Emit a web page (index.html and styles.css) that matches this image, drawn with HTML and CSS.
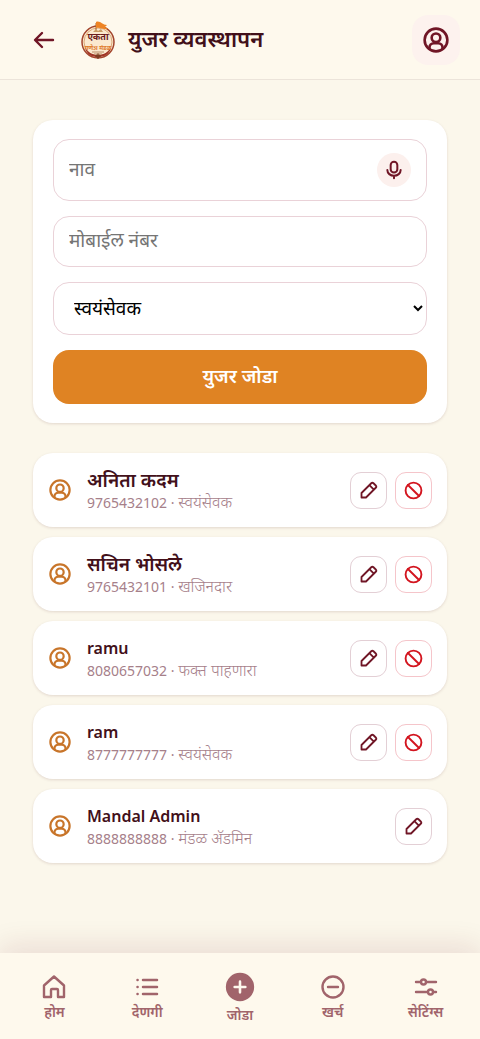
FILE: index.html
```html
<!DOCTYPE html>
<html lang="mr">
<head>
<meta charset="utf-8">
<meta name="viewport" content="width=device-width, initial-scale=1">
<title>युजर व्यवस्थापन</title>
<link rel="stylesheet" href="styles.css">
</head>
<body>
<svg class="sprite" aria-hidden="true">
  <symbol id="user" viewBox="0 0 24 24"><circle cx="12" cy="12" r="10.500"/><circle cx="12" cy="10" r="4"/><path d="M6 20v-1a4 4 0 0 1 4-4h4a4 4 0 0 1 4 4v1"/></symbol>
  <symbol id="pencil" viewBox="0 0 24 24"><path d="M2 22v-6L15 3Q16.500 1.500 18 3L21 6Q22.500 7.500 21 9L8 22ZM12.500 5.500l6 6"/></symbol>
  <symbol id="ban" viewBox="0 0 24 24"><circle cx="12" cy="12" r="10"/><path d="M5 5l14 14"/></symbol>
</svg>

<header class="topbar">
  <button class="back" type="button" aria-label="मागे">
    <svg class="icon icon-24" viewBox="0 0 24 24"><path d="M21 12H4M10 5l-7 7 7 7"/></svg>
  </button>
  <svg class="logo" viewBox="0 0 36 40" aria-hidden="true">
    <circle cx="18" cy="22" r="16" fill="#fbe9cf" stroke="#a3452c" stroke-width="1.500"/>
    <circle cx="18" cy="22" r="14" fill="none" stroke="#dba878" stroke-width="1"/>
    <path d="M5 28c2 7 7 9 13 9s11-2 13-9c-4 5-8 7-13 7s-9-2-13-7z" fill="#a03427"/>
    <path d="M16 3v8" stroke="#a8642e" stroke-width="1"/>
    <path d="M16 2c4-2 6 3 11 3l-2 2 3 2c-5 1-7-2-12-1z" fill="#ee8424"/>
    <path d="M15 36l3 3 3-3-3-3z" fill="#7d3c22"/>
    <path d="M13 12l3-3 2 2 3-2 2 3z" fill="#c99a63"/>
    <path d="M12 32h12M14 34h8" stroke="#b98a64" stroke-width="1"/>
    <text class="logo-name" x="18" y="20" text-anchor="middle">एकता</text>
    <text class="logo-sub" x="18" y="30" text-anchor="middle">गणेश मंडळ</text>
  </svg>
  <h1 class="title">युजर व्यवस्थापन</h1>
  <button class="profile" type="button" aria-label="प्रोफाइल"><svg class="icon icon-26"><use href="#user"/></svg></button>
</header>

<main class="content">
  <form class="card form">
    <div class="field field-voice">
      <input class="field-input" type="text" placeholder="नाव" aria-label="नाव">
      <button class="mic" type="button" aria-label="बोला">
        <svg class="icon icon-20" viewBox="0 0 24 24"><rect x="8" y="2" width="8" height="13" rx="4"/><path d="M4 12a8 7 0 0 0 16 0M12 19v3"/></svg>
      </button>
    </div>
    <input class="field field-phone" type="tel" placeholder="मोबाईल नंबर" aria-label="मोबाईल नंबर">
    <select class="field field-role" aria-label="भूमिका">
      <option>स्वयंसेवक</option>
      <option>खजिनदार</option>
      <option>फक्त पाहणारा</option>
    </select>
    <button class="submit" type="submit">युजर जोडा</button>
  </form>

  <ul class="users">
    <li class="card user">
      <svg class="icon icon-22 avatar"><use href="#user"/></svg>
      <div class="user-text"><div class="name">अनिता कदम</div><div class="meta">9765432102 · <span class="role">स्वयंसेवक</span></div></div>
      <div class="actions">
        <button class="action" type="button" aria-label="बदला"><svg class="icon icon-18"><use href="#pencil"/></svg></button>
        <button class="action danger" type="button" aria-label="बंद करा"><svg class="icon icon-19"><use href="#ban"/></svg></button>
      </div>
    </li>
    <li class="card user">
      <svg class="icon icon-22 avatar"><use href="#user"/></svg>
      <div class="user-text"><div class="name">सचिन भोसले</div><div class="meta">9765432101 · <span class="role">खजिनदार</span></div></div>
      <div class="actions">
        <button class="action" type="button" aria-label="बदला"><svg class="icon icon-18"><use href="#pencil"/></svg></button>
        <button class="action danger" type="button" aria-label="बंद करा"><svg class="icon icon-19"><use href="#ban"/></svg></button>
      </div>
    </li>
    <li class="card user">
      <svg class="icon icon-22 avatar"><use href="#user"/></svg>
      <div class="user-text"><div class="name name-latin">ramu</div><div class="meta">8080657032 · <span class="role">फक्त पाहणारा</span></div></div>
      <div class="actions">
        <button class="action" type="button" aria-label="बदला"><svg class="icon icon-18"><use href="#pencil"/></svg></button>
        <button class="action danger" type="button" aria-label="बंद करा"><svg class="icon icon-19"><use href="#ban"/></svg></button>
      </div>
    </li>
    <li class="card user">
      <svg class="icon icon-22 avatar"><use href="#user"/></svg>
      <div class="user-text"><div class="name name-latin">ram</div><div class="meta">8777777777 · <span class="role">स्वयंसेवक</span></div></div>
      <div class="actions">
        <button class="action" type="button" aria-label="बदला"><svg class="icon icon-18"><use href="#pencil"/></svg></button>
        <button class="action danger" type="button" aria-label="बंद करा"><svg class="icon icon-19"><use href="#ban"/></svg></button>
      </div>
    </li>
    <li class="card user">
      <svg class="icon icon-22 avatar"><use href="#user"/></svg>
      <div class="user-text"><div class="name name-latin">Mandal Admin</div><div class="meta">8888888888 · <span class="role">मंडळ अ‍ॅडमिन</span></div></div>
      <div class="actions">
        <button class="action" type="button" aria-label="बदला"><svg class="icon icon-18"><use href="#pencil"/></svg></button>
      </div>
    </li>
  </ul>
</main>

<nav class="tabs">
  <a class="tab" href="#home"><svg class="icon icon-24" viewBox="0 0 24 24"><path d="M2 10.500L12 1.500l10 9V22h-6v-7q0-1-1-1H10q-1 0-1 1v7H2z"/></svg>होम</a>
  <a class="tab" href="#donations"><svg class="icon icon-24" viewBox="0 0 24 24"><path d="M8 5h14M8 12h14M8 19h14M2.500 5h.1M2.500 12h.1M2.500 19h.1" stroke-width="2.500"/></svg>देणगी</a>
  <a class="tab" href="#add"><svg class="icon icon-30" viewBox="0 0 28 28"><circle cx="14" cy="14" r="12" fill="currentColor"/><path d="M14 9v10M9 14h10" stroke="#fff9ee"/></svg>जोडा</a>
  <a class="tab" href="#expenses"><svg class="icon icon-24" viewBox="0 0 24 24"><circle cx="12" cy="12" r="10.500"/><path d="M7 12h10"/></svg>खर्च</a>
  <a class="tab" href="#settings"><svg class="icon icon-24" viewBox="0 0 24 24"><path d="M2 7h5M12 7h10M2 17h12M19 17h3"/><circle cx="9.500" cy="7" r="2.500"/><circle cx="16.500" cy="17" r="2.500"/></svg>सेटिंग्स</a>
</nav>
</body>
</html>
```
FILE: styles.css
```css
* { box-sizing: border-box; }
body {
  margin: 0;
  min-height: 100vh;
  display: flex;
  flex-direction: column;
  background: #fbf7eb;
  color: #42101a;
  font-family: "Noto Sans", "Noto Sans Devanagari", sans-serif;
}
button, input, select { font-family: inherit; }
button { padding: 0; border: 0; background: none; color: inherit; cursor: pointer; }
.sprite { position: absolute; width: 0; height: 0; }
.icon {
  display: block;
  flex: none;
  fill: none;
  stroke: currentColor;
  stroke-width: 2.4;
  stroke-linecap: round;
  stroke-linejoin: round;
}
.icon-18 { width: 18px; height: 18px; }
.icon-19 { width: 19px; height: 19px; }
.icon-20 { width: 20px; height: 20px; }
.icon-22 { width: 22px; height: 22px; }
.icon-24 { width: 24px; height: 24px; }
.icon-26 { width: 26px; height: 26px; }
.icon-30 { width: 30px; height: 30px; }

.topbar {
  display: flex;
  align-items: center;
  height: 80px;
  padding: 0 20px 0 32px;
  background: #fef9ed;
  border-bottom: 1px solid #ece4da;
}
.back { color: #701626; }
.logo { width: 36px; height: 40px; margin-left: 24px; flex: none; }
.logo-name { font-size: 9px; font-weight: 700; fill: #6a1c1c; }
.logo-sub { font-size: 6px; font-weight: 700; fill: #e07a2b; }
.title { flex: 1; margin: 0 0 4px 12px; font-size: 22px; line-height: 32px; font-weight: 600; }
.profile {
  display: grid;
  place-items: center;
  width: 48px;
  height: 50px;
  border-radius: 16px;
  background: #fdf2ee;
  color: #701626;
}

.content { flex: 1; padding: 40px 33px; }
.card { background: #fff; border-radius: 20px; box-shadow: 0 1px 3px #42101a22; }
.form { display: flex; flex-direction: column; gap: 15px; padding: 19px 20px; }
.field {
  width: 100%;
  border: 1px solid #ead2d8;
  border-radius: 16px;
  background: #fff;
  color: #000;
  font-size: 19px;
  outline-color: #df8323;
}
.field::placeholder, .field-input::placeholder { color: #757575; opacity: 1; }
.field-voice { display: flex; align-items: center; height: 62px; padding: 0 15px; }
.field-input { flex: 1; min-width: 0; padding: 0 0 2px; border: 0; outline: 0; background: none; font-size: 19px; }
.mic {
  display: grid;
  place-items: center;
  width: 34px;
  height: 34px;
  border-radius: 50%;
  background: #fcf0ed;
  color: #701626;
}
.field-phone { height: 51px; padding: 0 15px 4px; }
.field-role { height: 53px; padding: 0 0 2px 16px; }
.submit {
  height: 54px;
  padding-bottom: 2px;
  border-radius: 16px;
  background: #df8323;
  color: #fff;
  font-size: 19px;
  font-weight: 600;
}

.users { display: flex; flex-direction: column; gap: 10px; margin: 30px 0 0; padding: 0; list-style: none; }
.user { display: flex; align-items: center; height: 74px; padding: 0 15px 0 16px; }
.avatar { color: #c8752a; }
.user-text { flex: 1; min-width: 0; margin-left: 16px; }
.name { font-size: 19px; line-height: 26px; font-weight: 600; }
.name-latin { font-size: 16px; }
.meta { font-size: 14px; line-height: 20px; color: #a6808a; }
.role { font-size: 16px; font-weight: 300; line-height: 16px; }
.actions { display: flex; gap: 8px; }
.action {
  display: grid;
  place-items: center;
  width: 37px;
  height: 37px;
  border: 1px solid #e3cfd5;
  border-radius: 11px;
  color: #701626;
}
.danger { border-color: #f5c5ca; color: #d3151f; }

.tabs {
  position: sticky;
  bottom: 0;
  display: grid;
  grid-template-columns: repeat(5, 1fr);
  height: 86px;
  padding: 6px 8px 0;
  background: #fef9ed;
  box-shadow: 0 -8px 28px #7016261c;
}
.tab {
  display: flex;
  flex-direction: column;
  align-items: center;
  justify-content: center;
  gap: 2px;
  color: #a1646b;
  font-size: 14px;
  line-height: 22px;
  font-weight: 600;
  text-decoration: none;
}
```
